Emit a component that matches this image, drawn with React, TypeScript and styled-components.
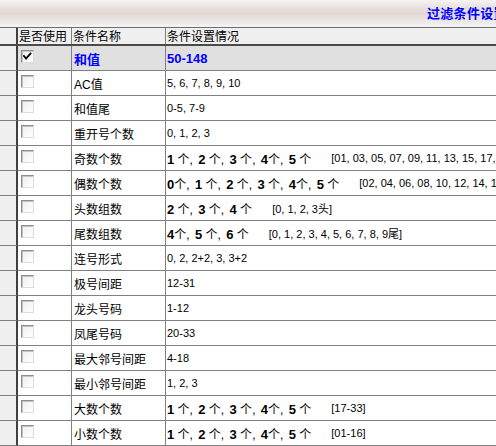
import React from "react";
import styled, { createGlobalStyle } from "styled-components";

const GlobalStyle = createGlobalStyle`
  html, body {
    margin: 0;
    padding: 0;
    background: #ffffff;
    overflow: hidden;
  }
  body {
    font-family: "Liberation Sans", "Noto Sans CJK SC", sans-serif;
    font-size: 12px;
    color: #000;
  }
`;

interface RowData {
  name: string;
  checked?: boolean;
  value?: string;
  counts?: { n: string; sp: boolean }[];
  extra?: string;
}

// "4_" means no space between the number and 个
const c = (list: string) =>
  list.split(" ").map((s) => ({ n: s.replace("_", ""), sp: !s.endsWith("_") }));

const rows: RowData[] = [
  { name: "和值", checked: true, value: "50-148" },
  { name: "AC值", value: "5, 6, 7, 8, 9, 10" },
  { name: "和值尾", value: "0-5, 7-9" },
  { name: "重开号个数", value: "0, 1, 2, 3" },
  { name: "奇数个数", counts: c("1 2 3 4_ 5"), extra: "[01, 03, 05, 07, 09, 11, 13, 15, 17, 19, 21, 23, 25, 27, 29, 31, 33]" },
  { name: "偶数个数", counts: c("0_ 1 2 3 4_ 5"), extra: "[02, 04, 06, 08, 10, 12, 14, 16, 18, 20, 22, 24, 26, 28, 30, 32]" },
  { name: "头数组数", counts: c("2 3 4"), extra: "[0, 1, 2, 3头]" },
  { name: "尾数组数", counts: c("4_ 5 6"), extra: "[0, 1, 2, 3, 4, 5, 6, 7, 8, 9尾]" },
  { name: "连号形式", value: "0, 2, 2+2, 3, 3+2" },
  { name: "极号间距", value: "12-31" },
  { name: "龙头号码", value: "1-12" },
  { name: "凤尾号码", value: "20-33" },
  { name: "最大邻号间距", value: "4-18" },
  { name: "最小邻号间距", value: "1, 2, 3" },
  { name: "大数个数", counts: c("1 2 3 4_ 5"), extra: "[17-33]" },
  { name: "小数个数", counts: c("1 2 3 4_ 5"), extra: "[01-16]" },
];

const Page = styled.div`
  width: 496px;
  height: 446px;
  overflow: hidden;
  display: flex;
  flex-direction: column;
`;

const TitleBar = styled.div`
  height: 25px;
  flex-shrink: 0;
  border-bottom: 2px solid #f3f3f3;
  background: linear-gradient(#f5f3f3 0%, #e6dfdc 35%, #e2d9d6 55%, #ebe7e6 85%, #f1efef 100%);
  display: flex;
  align-items: center;
  padding-left: 427px;
  overflow: hidden;
  white-space: nowrap;
`;

const Title = styled.span`
  font-family: "Noto Sans CJK SC", sans-serif;
  font-weight: bold;
  font-size: 13px;
  color: #0000ff;
  letter-spacing: 0.3px;
`;

const Grid = styled.div`
  display: grid;
  grid-template-columns: 18px 54px 94px 1fr;
`;

const HeaderRow = styled(Grid)`
  height: 19px;
  box-sizing: border-box;
  background: #f0f0f0;
  border-top: 1px solid #6e6e6e;
  border-bottom: 2px solid #4a4a4a;
`;

const HeadCell = styled.div<{ $edge?: boolean; $last?: boolean }>`
  box-sizing: border-box;
  padding-left: 1px;
  display: flex;
  align-items: center;
  white-space: nowrap;
  overflow: hidden;
  font-family: "Noto Sans CJK SC", sans-serif;
  font-size: 12px;
  line-height: 12px;
  border-right: ${(p) => (p.$edge ? "2px solid #404040" : p.$last ? "none" : "1px solid #808080")};
`;

const BodyRow = styled(Grid)<{ $selected?: boolean }>`
  height: 25px;
  background: ${(p) => (p.$selected ? "#e0e0e0" : "#ffffff")};
`;

const Cell = styled.div<{ $last?: boolean }>`
  box-sizing: border-box;
  border-bottom: 1px solid #808080;
  border-right: ${(p) => (p.$last ? "none" : "1px solid #808080")};
  display: flex;
  align-items: center;
  white-space: nowrap;
  overflow: hidden;
`;

const Indicator = styled(Cell)`
  background: #f0f0f0;
  border-right: 2px solid #404040;
`;

const CheckCell = styled(Cell)`
  align-items: flex-start;
  padding: 4px 0 0 3px;
`;

const Box = styled.div`
  width: 13px;
  height: 13px;
  box-sizing: border-box;
  border: 1px solid;
  border-color: #8c8c8c #dcdcdc #dcdcdc #8c8c8c;
  box-shadow: inset 1px 1px 0 #c4c4c4;
  background: linear-gradient(135deg, #eeeeee, #ffffff);
  display: flex;
  align-items: center;
  justify-content: center;
`;

const NameCell = styled(Cell)<{ $selected?: boolean }>`
  padding-left: 2px;
  font-family: ${(p) => (p.$selected ? `"Noto Sans CJK SC", sans-serif` : `"Liberation Sans", "Noto Sans CJK SC", sans-serif`)};
  font-size: ${(p) => (p.$selected ? "13px" : "12px")};
  font-weight: ${(p) => (p.$selected ? "bold" : "normal")};
  color: ${(p) => (p.$selected ? "#0000ff" : "#000")};
`;

const ValueCell = styled(Cell)`
  padding-left: 1px;
  font-size: 11px;
  font-family: "Liberation Sans", "Noto Sans CJK SC", sans-serif;
`;

const Strong = styled.span`
  font-family: "Liberation Sans", sans-serif;
  font-weight: bold;
  font-size: 13px;
  color: #0000ff;
`;

const Count = styled.span`
  font-size: 12px;
  font-family: "Liberation Sans", "Noto Sans CJK SC", sans-serif;
`;

const Num = styled.b`
  font-family: "Liberation Sans", sans-serif;
  font-weight: bold;
  font-size: 13px;
`;

const Sep = styled.span`
  margin-right: 2px;
`;

const Extra = styled.span`
  margin-left: 20px;
  font-size: 11px;
`;

function Check() {
  return (
    <svg width="11" height="11" viewBox="0 0 11 11">
      <path d="M2 5 L4 7.5 L8.5 2.5" fill="none" stroke="#000" strokeWidth="1.8" strokeLinecap="square" />
    </svg>
  );
}

function Row({ row }: { row: RowData }) {
  const counts = row.counts ?? [];
  return (
    <BodyRow $selected={row.checked}>
      <Indicator />
      <CheckCell>
        <Box>{row.checked && <Check />}</Box>
      </CheckCell>
      <NameCell $selected={row.checked}>{row.name}</NameCell>
      <ValueCell $last>
        {row.checked && <Strong>{row.value}</Strong>}
        {!row.checked && row.value}
        {counts.length > 0 && (
          <Count>
            {counts.map((it, i) => (
              <React.Fragment key={i}>
                <Num>{it.n}</Num>
                {it.sp ? " " : ""}个{i < counts.length - 1 && <Sep>, </Sep>}
              </React.Fragment>
            ))}
          </Count>
        )}
        {row.extra && <Extra>{row.extra}</Extra>}
      </ValueCell>
    </BodyRow>
  );
}

export default function App() {
  return (
    <Page>
      <GlobalStyle />
      <TitleBar>
        <Title>过滤条件设置</Title>
      </TitleBar>
      <HeaderRow>
        <HeadCell $edge />
        <HeadCell>是否使用</HeadCell>
        <HeadCell>条件名称</HeadCell>
        <HeadCell $last>条件设置情况</HeadCell>
      </HeaderRow>
      {rows.map((r) => (
        <Row key={r.name} row={r} />
      ))}
    </Page>
  );
}
